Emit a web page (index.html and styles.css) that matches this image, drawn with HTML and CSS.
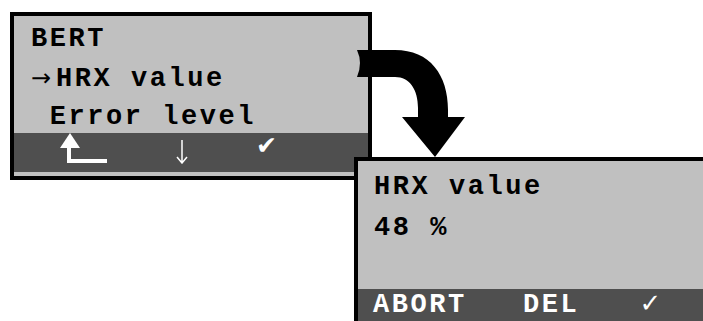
FILE: index.html
```html
<!DOCTYPE html>
<html lang="en">
<head>
    <meta charset="UTF-8">
    <title>BERT HRX value</title>
    <link rel="stylesheet" href="styles.css">
</head>
<body>

    <div class="screen screen-menu">
        <div class="lines">
            <div class="line">BERT</div>
            <div class="line"><span class="cursor">&rarr;</span>HRX value</div>
            <div class="line"> Error level</div>
        </div>
        <div class="keys keys-menu">
            <svg class="key-back" width="48" height="30" viewBox="0 0 48 30">
                <polygon points="10,0 0,15 20,15" fill="#fff"/>
                <rect x="7" y="14" width="4" height="16" fill="#fff"/>
                <rect x="7" y="26" width="40" height="4" fill="#fff"/>
            </svg>
            <svg class="key-down" width="12" height="24" viewBox="0 0 12 24">
                <path d="M6 0 V23 M1 17 L6 23 L11 17" stroke="#fff" stroke-width="1.5" fill="none"/>
            </svg>
            <span class="key-ok">&#10004;</span>
        </div>
        <div class="strip"></div>
    </div>

    <div class="screen screen-value">
        <div class="lines">
            <div class="line">HRX value</div>
            <div class="line">48 %</div>
        </div>
        <div class="keys keys-value">ABORT   DEL   <span class="tick">&#10003;</span></div>
    </div>

    <!-- the big arrow from the menu to the value screen -->
    <svg class="jump" width="140" height="120" viewBox="0 0 140 120">
        <path d="M17 10 L55 10 C90 10 108 35 108 70 L108 77 L125 77 L95 117 L62 77 L78 77 L78 68 C78 50 70 37 55 37 L17 37 Q23 23 17 10 Z" fill="#000"/>
    </svg>

</body>
</html>
```

FILE: styles.css
```css
html, body {
    overflow: hidden;
}

body {
    margin: 0;
    padding: 0;
    background-color: #fff;
    width: 703px;
    height: 321px;
    position: relative;
    font-family: "Liberation Mono", "Courier New", monospace;
    font-weight: bold;
    font-size: 27px;
    letter-spacing: 2.55px;
    color: #000;
}

.screen {
    background-color: #c0c0c0;
    border: 4px solid #000;
    box-sizing: border-box;
}

.line {
    white-space: pre;
}

.screen-menu {
    margin: 12px 0 0 10px;
    width: 362px;
    height: 168px;
}

.screen-menu .lines {
    height: 117px;
    box-sizing: border-box;
    padding: 4px 0 0 17px;
    line-height: 38.5px;
}

.cursor {
    display: inline-block;
    width: 25px;
    font-family: "DejaVu Sans", sans-serif;
    font-weight: normal;
    font-size: 24px;
    letter-spacing: 0;
}

.keys {
    background-color: #4f4f4f;
    color: #fff;
}

.keys-menu {
    height: 39px;
    display: flex;
    align-items: flex-start;
    padding-left: 46px;
}

.key-down {
    margin: 7px 0 0 68px;
}

.key-ok {
    margin-left: 68px;
    font-family: "DejaVu Sans", sans-serif;
    font-size: 25px;
    line-height: 26px;
    letter-spacing: 0;
}

.strip {
    height: 4px;
}

.screen-value {
    position: relative;
    margin: -23px 0 0 354px;
    width: 380px;
    height: 172px;
}

.screen-value .lines {
    height: 128px;
    box-sizing: border-box;
    padding: 6px 0 0 16px;
    line-height: 41px;
}

.keys-value {
    height: 40px;
    padding-left: 15px;
    line-height: 29px;
    white-space: pre;
}

.tick {
    font-family: "DejaVu Sans", sans-serif;
    font-weight: normal;
    font-size: 26px;
    letter-spacing: 0;
    margin-left: 4px;
}

.jump {
    position: absolute;
    left: 340px;
    top: 40px;
}
```
